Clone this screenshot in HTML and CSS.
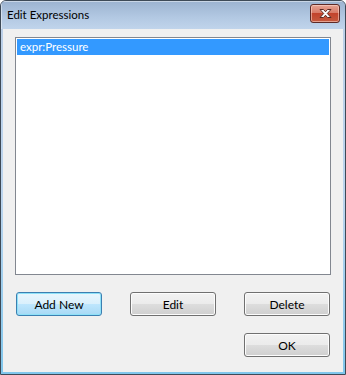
FILE: index.html
```html
<!DOCTYPE html>
<html>
<head>
<meta charset="utf-8">
<link rel="stylesheet" href="styles.css">
</head>
<body>
<div class="window">
  <div class="titlebar">
    <span class="title">Edit Expressions</span>
    <button class="close" aria-label="Close">
      <svg width="15" height="11" viewBox="0 0 15 11">
        <path d="M2 1.5 L5.5 1.5 L7.5 3.8 L9.5 1.5 L13 1.5 L9.3 5.5 L13 9.5 L9.5 9.5 L7.5 7.2 L5.5 9.5 L2 9.5 L5.7 5.5 Z" fill="#ffffff" stroke="#5a2a22" stroke-width="1" stroke-linejoin="round"/>
      </svg>
    </button>
  </div>
  <div class="client">
    <div class="listbox">
      <div class="item selected">expr:Pressure</div>
    </div>
    <div class="row">
      <button class="btn default">Add New</button>
      <button class="btn">Edit</button>
      <button class="btn">Delete</button>
    </div>
    <div class="row end">
      <button class="btn">OK</button>
    </div>
  </div>
</div>
</body>
</html>
```
FILE: styles.css
```css
html, body {
  margin: 0;
  padding: 0;
  background: #ffffff;
}
body {
  font-family: "Lato", "Open Sans", sans-serif;
  font-size: 12px;
  color: #000;
}
.window {
  width: 346px;
  height: 375px;
  box-sizing: border-box;
  border: 1px solid #3e4a57;
  border-radius: 6px 6px 0 0;
  background: linear-gradient(to bottom, #a9c0da 0px, #bcd0e8 28px, #bcd5ee 200px, #7fc6ec 375px);
  display: flex;
  flex-direction: column;
  overflow: hidden;
}
.titlebar {
  height: 28px;
  flex: none;
  display: flex;
  align-items: flex-start;
  justify-content: space-between;
  background: linear-gradient(to bottom, #9cb3d0, #b3c9e3 60%, #c0d4eb);
  box-shadow: inset 1px 1px 0 rgba(255,255,255,0.45);
}
.title {
  margin: 5px 0 0 6px;
  font-size: 11.5px;
  line-height: 17px;
  color: #000;
}
.close {
  margin: 3px 5px 0 0;
  width: 30px;
  height: 19px;
  padding: 0;
  border: 1px solid #5e2a26;
  border-radius: 3px;
  background: linear-gradient(to bottom, #e6a393 0%, #d87b68 45%, #c2432c 50%, #c55a3f 100%);
  box-shadow: inset 0 0 0 1px rgba(255,220,210,0.55);
  display: flex;
  align-items: center;
  justify-content: center;
}
.close svg { display: block; }
.client {
  flex: 1;
  margin: 0 2px 2px 2px;
  background: #f0f0f0;
  display: flex;
  flex-direction: column;
  padding: 8px 12px 0 12px;
}
.listbox {
  height: 238px;
  box-sizing: border-box;
  border: 1px solid #828790;
  background: #fff;
  padding: 1px;
}
.item {
  height: 16px;
  line-height: 16px;
  padding-left: 3px;
  font-size: 11.5px;
}
.item.selected {
  background: #3399ff;
  color: #fff;
}
.row {
  display: flex;
  justify-content: space-between;
  padding: 0 1px;
  margin-top: 17px;
}
.row.end {
  justify-content: flex-end;
}
.btn {
  width: 86px;
  height: 24px;
  box-sizing: border-box;
  padding: 0;
  font-family: inherit;
  font-size: 12px;
  color: #000;
  border: 1px solid #707070;
  border-radius: 3px;
  background: linear-gradient(to bottom, #f2f2f2 0%, #ebebeb 50%, #dddddd 51%, #cfcfcf 100%);
  box-shadow: inset 0 0 0 1px #fcfcfc;
}
.btn.default {
  border-color: #3c7fb1;
  background: linear-gradient(to bottom, #eaf6fd 0%, #d9f0fc 50%, #bee6fd 51%, #a7d9f5 100%);
  box-shadow: inset 0 0 0 1px #8ee1f8;
}
```
